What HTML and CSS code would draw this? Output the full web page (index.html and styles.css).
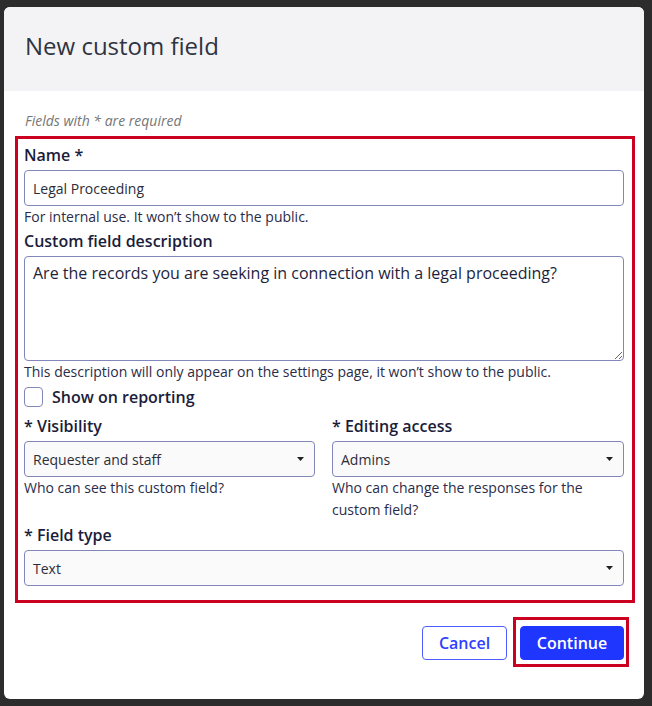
FILE: index.html
```html
<!DOCTYPE html>
<html lang="en">
<head>
<meta charset="utf-8">
<title>New custom field</title>
<link rel="stylesheet" href="styles.css">
</head>
<body>
<div class="modal">
  <div class="modal-header">
    <h1 class="modal-title">New custom field</h1>
  </div>
  <div class="modal-body">
    <p class="required-note">Fields with * are required</p>
    <div class="form-box">
      <label class="label">Name *</label>
      <div class="input">Legal Proceeding</div>
      <p class="help">For internal use. It won’t show to the public.</p>

      <label class="label label-gap">Custom field description</label>
      <textarea class="textarea" readonly>Are the records you are seeking in connection with a legal proceeding?</textarea>
      <p class="help">This description will only appear on the settings page, it won’t show to the public.</p>

      <div class="check-row">
        <span class="checkbox"></span>
        <span class="check-label">Show on reporting</span>
      </div>

      <div class="two-col">
        <div class="col">
          <label class="label">* Visibility</label>
          <div class="select"><span>Requester and staff</span><svg class="caret" width="7" height="4" viewBox="0 0 7 4"><path d="M0 0h7L3.5 4z" fill="#222"/></svg></div>
          <p class="help">Who can see this custom field?</p>
        </div>
        <div class="col">
          <label class="label">* Editing access</label>
          <div class="select"><span>Admins</span><svg class="caret" width="7" height="4" viewBox="0 0 7 4"><path d="M0 0h7L3.5 4z" fill="#222"/></svg></div>
          <p class="help">Who can change the responses for the custom field?</p>
        </div>
      </div>

      <label class="label label-gap2">* Field type</label>
      <div class="select"><span>Text</span><svg class="caret" width="7" height="4" viewBox="0 0 7 4"><path d="M0 0h7L3.5 4z" fill="#222"/></svg></div>
    </div>
  </div>
  <div class="modal-footer">
    <button class="btn btn-cancel">Cancel</button>
    <div class="btn-highlight">
      <button class="btn btn-primary">Continue</button>
    </div>
  </div>
</div>
</body>
</html>
```

FILE: styles.css
```css
* { box-sizing: border-box; }
html, body { margin: 0; padding: 0; }
body {
  background: #2c2c2c;
  width: 652px;
  height: 706px;
  overflow: hidden;
  font-family: "Open Sans", "Noto Sans", sans-serif;
  color: #1d1f3c;
}
.modal {
  margin: 7px 0 0 4px;
  width: 640px;
  height: 692px;
  background: #ffffff;
  border-radius: 6px;
  overflow: hidden;
  display: flex;
  flex-direction: column;
}
.modal-header {
  background: #f3f3f5;
  height: 84px;
  padding: 23px 21px 0;
}
.modal-title {
  margin: 0;
  font-size: 24px;
  line-height: 32px;
  font-weight: 400;
  color: #2f3441;
}
.modal-body {
  padding: 0 9px 0 11px;
}
.required-note {
  margin: 20px 0 5px 10px;
  font-size: 14px;
  line-height: 20px;
  font-style: italic;
  color: #767676;
}
.form-box {
  border: 3px solid #cc0020;
  padding: 5px 8px 14px 6px;
  display: flex;
  flex-direction: column;
}
.label {
  display: block;
  font-size: 16px;
  line-height: 22px;
  font-weight: 600;
  color: #1b1d3a;
  margin-bottom: 4px;
}
.label-gap { margin-top: 2px; }
.label-gap2 { margin-top: 3px; }
.input, .select {
  height: 36px;
  border: 1px solid #8287b9;
  border-radius: 4px;
  padding: 0 8px;
  font-size: 14px;
  display: flex;
  align-items: center;
  color: #2d2d3a;
  background: #ffffff;
}
.select {
  background: #fafafa;
  justify-content: space-between;
  padding-right: 10px;
}
.caret { display: block; }
.textarea {
  display: block;
  width: 100%;
  height: 105px;
  margin: 0;
  border: 1px solid #8287b9;
  border-radius: 4px;
  padding: 5px 8px;
  font-family: "Open Sans", "Noto Sans", sans-serif;
  font-size: 16px;
  line-height: 22px;
  color: #1d1f3c;
  background: #ffffff;
  resize: vertical;
  outline: none;
}
.help {
  margin: 0;
  font-size: 14px;
  line-height: 22px;
  color: #2a2c4a;
}
.check-row {
  display: flex;
  align-items: center;
  gap: 9px;
  margin-top: 3px;
}
.checkbox {
  width: 19px;
  height: 20px;
  border: 1px solid #8287b9;
  border-radius: 4px;
  background: #fff;
}
.check-label {
  font-size: 16px;
  line-height: 22px;
  font-weight: 600;
  color: #1b1d3a;
}
.two-col {
  display: grid;
  grid-template-columns: 291px 292px;
  column-gap: 17px;
  margin-top: 7px;
}
.modal-footer {
  display: flex;
  justify-content: flex-end;
  align-items: flex-start;
  padding: 14px 15px 0 0;
}
.btn {
  font-family: "Open Sans", "Noto Sans", sans-serif;
  font-size: 16px;
  font-weight: 600;
  height: 34px;
  border-radius: 4px;
  cursor: pointer;
  line-height: 1;
}
.btn-cancel {
  margin-top: 9px;
  margin-right: 6px;
  width: 85px;
  background: #ffffff;
  border: 1px solid #4d5dff;
  color: #2f3fff;
}
.btn-highlight {
  border: 3px solid #cc0020;
  padding: 6px 2px 4px 4px;
  display: flex;
}
.btn-primary {
  width: 104px;
  background: #1f36ff;
  border: 1px solid #1f36ff;
  color: #ffffff;
}
```
